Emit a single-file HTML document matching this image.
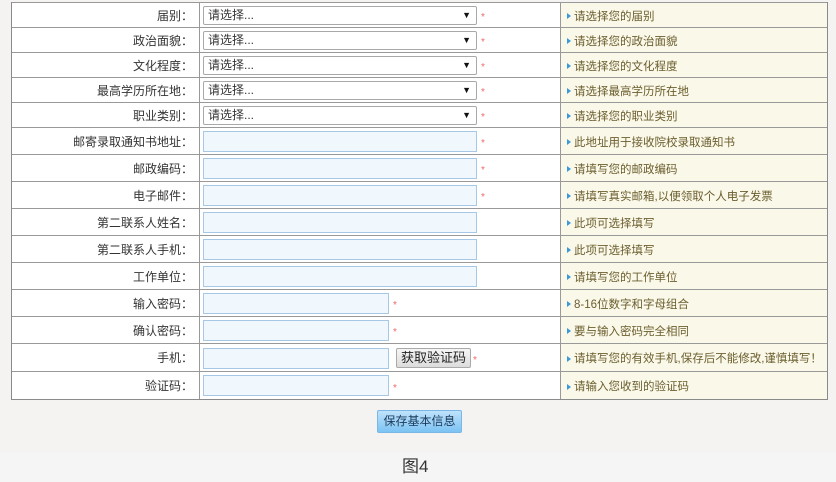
<!DOCTYPE html>
<html><head><meta charset="utf-8"><style>
*{margin:0;padding:0;box-sizing:border-box}
body{width:836px;height:482px;background:#f4f3f1;position:relative;overflow:hidden;font-family:"Liberation Sans","Noto Sans CJK SC",sans-serif;font-size:12px;color:#333}
.bot{position:absolute;left:0;top:452px;width:836px;height:30px;background:#f5f5f5}
.tbl{position:absolute;left:11px;top:2px;width:817px;height:398px;border:1px solid #8a8a8a;border-top:none;background:#fff;overflow:hidden}
.row{position:absolute;left:0;width:815px;border-top:1px solid #999}
.r25{height:25px;line-height:24px}
.r27{height:27px;line-height:26px}
.r28{height:28px;line-height:27px}
.lab{position:absolute;left:0;top:1px;width:187px;text-align:right;padding-right:6px;color:#333;white-space:nowrap}
.tip{position:absolute;left:548px;top:0;bottom:0;width:267px;background:#faf8e9;border-left:1px solid #999;color:#6b5e2e;white-space:nowrap;font-size:11.5px}
.tip span{position:absolute;left:13px;top:2px}
.tip i{position:absolute;left:6px;top:50%;margin-top:-2px;width:0;height:0;border-left:4px solid #3a9ad9;border-top:3px solid transparent;border-bottom:3px solid transparent}
.vl{position:absolute;left:187px;top:0;bottom:0;border-left:1px solid #999}
.sel{position:absolute;left:191px;top:3px;width:274px;height:19px;border:1px solid #a9a9a9;border-radius:2px;background:#fff;padding-left:4px;line-height:17px;font-size:12px;color:#333}
.sel b{position:absolute;right:5px;top:0;font-size:9px;color:#111;line-height:17px}
.inp{position:absolute;left:191px;top:3px;height:21px;border:1px solid #a6c8e6;background:#f0f7fd}
.star{position:absolute;top:3px;color:#f06a6a;font-size:10px}
.btn{position:absolute;left:384px;top:4px;width:75px;height:20px;border:1px solid #aaa;border-radius:2px;background:linear-gradient(#f6f6f6,#dcdcdc);font-size:13px;text-align:center;line-height:18px;color:#222}
.save{position:absolute;left:377px;top:410px;width:85px;height:23px;border:1px solid #7ab7e6;border-radius:2px;background:linear-gradient(#bfe2fb,#7cc3f3);text-align:center;line-height:21px;color:#1d3a5a;font-size:12px}
.cap{position:absolute;left:402px;top:456px;font-size:17px;line-height:22px;color:#333}
</style></head><body>
<div class="bot"></div>
<div class="tbl">
<div class="row r25" style="top:0"><div class="vl"></div><div class="lab">届别：</div><div class="sel">请选择...<b>▼</b></div><span class="star" style="left:469px">*</span><div class="tip"><i></i><span>请选择您的届别</span></div></div>
<div class="row r25" style="top:25px"><div class="vl"></div><div class="lab">政治面貌：</div><div class="sel">请选择...<b>▼</b></div><span class="star" style="left:469px">*</span><div class="tip"><i></i><span>请选择您的政治面貌</span></div></div>
<div class="row r25" style="top:50px"><div class="vl"></div><div class="lab">文化程度：</div><div class="sel">请选择...<b>▼</b></div><span class="star" style="left:469px">*</span><div class="tip"><i></i><span>请选择您的文化程度</span></div></div>
<div class="row r25" style="top:75px"><div class="vl"></div><div class="lab">最高学历所在地：</div><div class="sel">请选择...<b>▼</b></div><span class="star" style="left:469px">*</span><div class="tip"><i></i><span>请选择最高学历所在地</span></div></div>
<div class="row r25" style="top:100px"><div class="vl"></div><div class="lab">职业类别：</div><div class="sel">请选择...<b>▼</b></div><span class="star" style="left:469px">*</span><div class="tip"><i></i><span>请选择您的职业类别</span></div></div>

<div class="row r27" style="top:125px"><div class="vl"></div><div class="lab">邮寄录取通知书地址：</div><div class="inp" style="width:274px"></div><span class="star" style="left:469px">*</span><div class="tip"><i></i><span>此地址用于接收院校录取通知书</span></div></div>
<div class="row r27" style="top:152px"><div class="vl"></div><div class="lab">邮政编码：</div><div class="inp" style="width:274px"></div><span class="star" style="left:469px">*</span><div class="tip"><i></i><span>请填写您的邮政编码</span></div></div>
<div class="row r27" style="top:179px"><div class="vl"></div><div class="lab">电子邮件：</div><div class="inp" style="width:274px"></div><span class="star" style="left:469px">*</span><div class="tip"><i></i><span>请填写真实邮箱,以便领取个人电子发票</span></div></div>
<div class="row r27" style="top:206px"><div class="vl"></div><div class="lab">第二联系人姓名：</div><div class="inp" style="width:274px"></div><div class="tip"><i></i><span>此项可选择填写</span></div></div>
<div class="row r27" style="top:233px"><div class="vl"></div><div class="lab">第二联系人手机：</div><div class="inp" style="width:274px"></div><div class="tip"><i></i><span>此项可选择填写</span></div></div>
<div class="row r27" style="top:260px"><div class="vl"></div><div class="lab">工作单位：</div><div class="inp" style="width:274px"></div><div class="tip"><i></i><span>请填写您的工作单位</span></div></div>
<div class="row r27" style="top:287px"><div class="vl"></div><div class="lab">输入密码：</div><div class="inp" style="width:186px"></div><span class="star" style="left:381px">*</span><div class="tip"><i></i><span>8-16位数字和字母组合</span></div></div>
<div class="row r27" style="top:314px"><div class="vl"></div><div class="lab">确认密码：</div><div class="inp" style="width:186px"></div><span class="star" style="left:381px">*</span><div class="tip"><i></i><span>要与输入密码完全相同</span></div></div>
<div class="row r28" style="top:341px"><div class="vl"></div><div class="lab">手机：</div><div class="inp" style="top:4px;width:186px"></div><div class="btn">获取验证码</div><span class="star" style="left:461px">*</span><div class="tip"><i></i><span>请填写您的有效手机,保存后不能修改,谨慎填写！</span></div></div>
<div class="row r28" style="top:369px"><div class="vl"></div><div class="lab">验证码：</div><div class="inp" style="width:186px"></div><span class="star" style="left:381px">*</span><div class="tip"><i></i><span>请输入您收到的验证码</span></div></div>
</div>
<div class="save">保存基本信息</div>
<div class="cap">图4</div>
</body></html>
